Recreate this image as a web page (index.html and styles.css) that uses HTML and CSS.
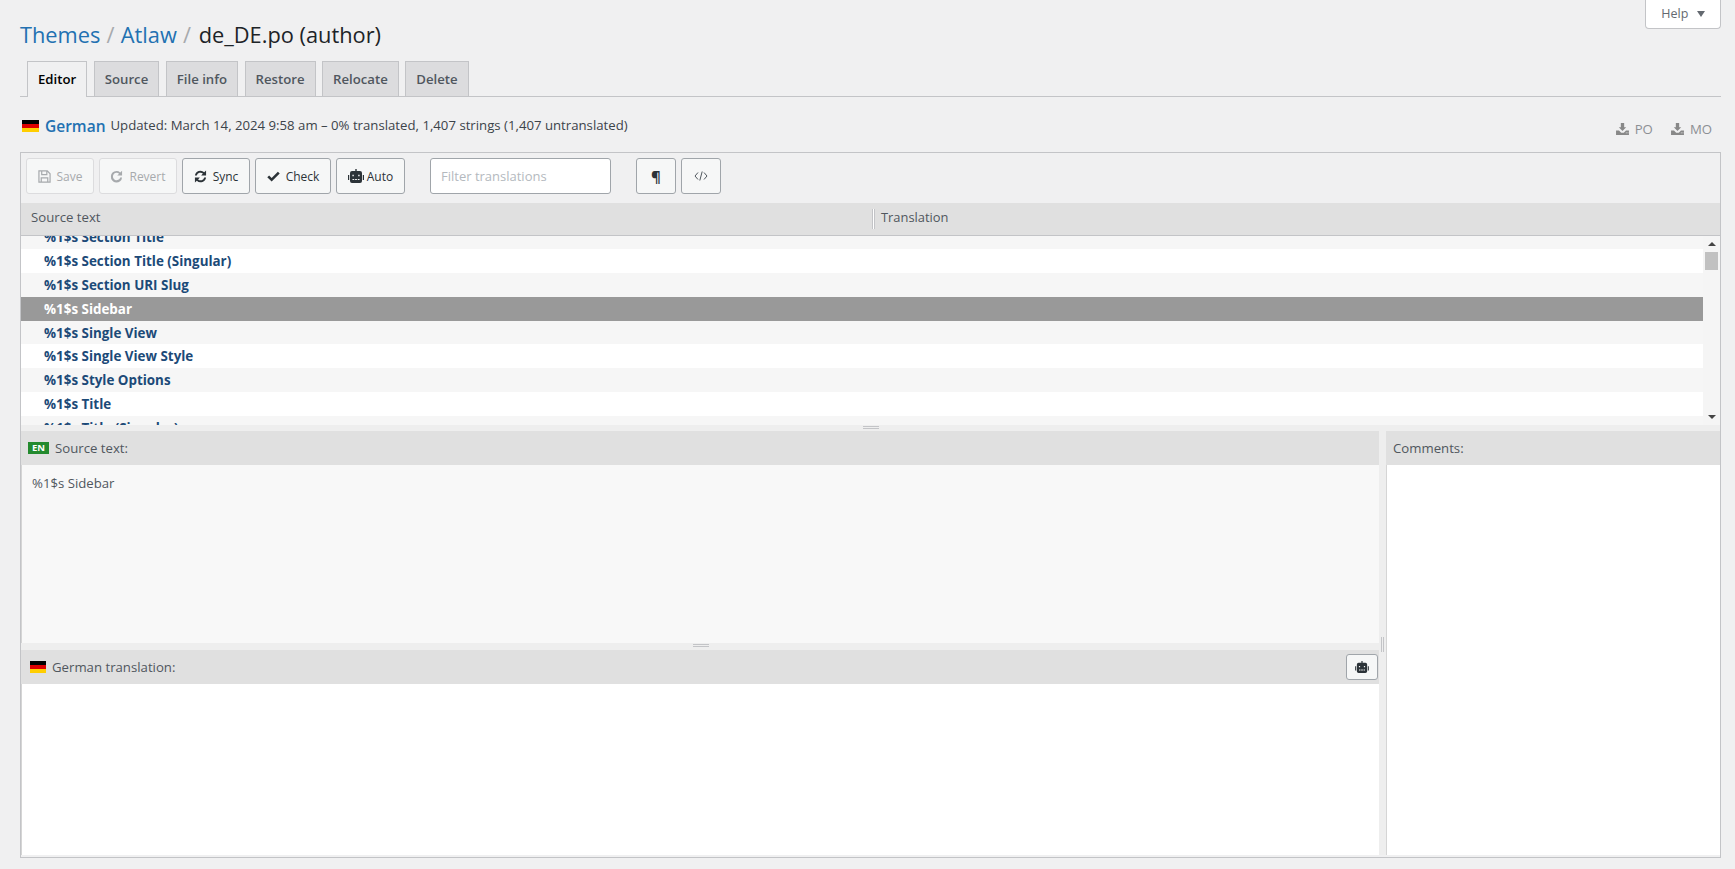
FILE: index.html
```html
<!DOCTYPE html>
<html lang="en">
<head>
    <meta charset="UTF-8">
    <meta name="viewport" content="width=device-width, initial-scale=1.0">
    <title>de_DE.po (author)</title>
    <link rel="stylesheet" href="styles.css">
</head>
<body>
    <svg class="sprites" width="0" height="0" aria-hidden="true">
        <symbol id="i-robot" viewBox="0 0 16 14">
            <path fill-rule="evenodd" d="M7.300 0h1.400v2H12a2 2 0 0 1 2 2v8a2 2 0 0 1-2 2H4a2 2 0 0 1-2-2V4a2 2 0 0 1 2-2h3.300zM4.400 5.800v1.400h1.400V5.800zm5.800 0v1.400h1.400V5.800zM4.500 10v1h1.700v-1zm2.600 0v1h1.800v-1zm2.700 0v1h1.700v-1zM0 6h1.200v5H0zM14.800 6H16v5h-1.200z"/>
        </symbol>
        <symbol id="i-download" viewBox="0 0 14 13">
            <path d="M5.200 0h3.600v4.600H11L7 8.800 3 4.600h2.200zM0 8.200h3.200L5.600 10.600h2.800l2.400-2.400H14V13H0zM10.600 10.200v1h1v-1zm1.800 0v1h1v-1z"/>
        </symbol>
    </svg>

    <div class="wrap">
        <a class="help-tab">Help <span class="caret"></span></a>

        <h1 class="crumbs">
            <a>Themes</a> <span class="sep">/</span> <a>Atlaw</a> <span class="sep sep-last">/</span> de_DE.po (author)
        </h1>

        <nav class="tabs">
            <a class="tab active">Editor</a>
            <a class="tab">Source</a>
            <a class="tab">File info</a>
            <a class="tab">Restore</a>
            <a class="tab">Relocate</a>
            <a class="tab">Delete</a>
        </nav>

        <div class="meta">
            <p class="summary">
                <span class="flag"></span><a class="lang">German</a><span class="stats">Updated: March 14, 2024 9:58 am – 0% translated, 1,407 strings (1,407 untranslated)</span>
            </p>
            <div class="downloads">
                <a class="dl"><svg class="dl-icon"><use href="#i-download"/></svg>PO</a>
                <a class="dl"><svg class="dl-icon"><use href="#i-download"/></svg>MO</a>
            </div>
        </div>

        <div class="editor">
            <div class="toolbar">
                <button class="btn btn-save" disabled>
                    <svg class="icon icon-save" viewBox="0 0 14 14"><path d="M1 1H10L13 4V13H1ZM4 1V5H9.500V1M3.500 13V8.500H10.500V13" fill="none" stroke="currentColor" stroke-width="1.300"/></svg>
                    Save
                </button>
                <button class="btn btn-revert" disabled>
                    <svg class="icon" viewBox="0 0 14 14"><path d="M1 7a6 6 0 0 1 10-4.400L13 .8V6H7.800l2-2A4 4 0 1 0 11 8h2A6 6 0 0 1 1 7z"/></svg>
                    Revert
                </button>
                <button class="btn btn-sync">
                    <svg class="icon" viewBox="0 0 14 14"><path d="M1 6A6 6 0 0 1 11 2.300L13 .5V5.800H7.700L9.600 3.900A4 4 0 0 0 3 6zM13 8A6 6 0 0 1 3 11.700L1 13.500V8.200H6.300L4.400 10.100A4 4 0 0 0 11 8z"/></svg>
                    Sync
                </button>
                <button class="btn btn-check">
                    <svg class="icon" viewBox="0 0 14 14"><path d="M5 12.500L.3 7.800 2.300 5.800 5 8.500 11.700 1.800 13.700 3.800z"/></svg>
                    Check
                </button>
                <button class="btn btn-auto">
                    <svg class="icon icon-robot"><use href="#i-robot"/></svg>
                    Auto
                </button>
                <input class="filter" type="text" placeholder="Filter translations">
                <button class="btn btn-square btn-para">¶</button>
                <button class="btn btn-square">
                    <svg class="icon-code" viewBox="0 0 14 10"><path d="M4 1.500L1 5l3 3.500M10 1.500L13 5l-3 3.500M8.200 .5L5.800 9.500" fill="none" stroke="currentColor" stroke-width="1"/></svg>
                </button>
            </div>

            <div class="grid-head">
                <div class="col col-source">Source text</div>
                <div class="col col-target">Translation</div>
            </div>

            <div class="list">
                <div class="rows">
                    <div class="rows-inner">
                        <div class="row">%1$s Section Title</div>
                        <div class="row">%1$s Section Title (Singular)</div>
                        <div class="row">%1$s Section URI Slug</div>
                        <div class="row selected">%1$s Sidebar</div>
                        <div class="row">%1$s Single View</div>
                        <div class="row">%1$s Single View Style</div>
                        <div class="row">%1$s Style Options</div>
                        <div class="row">%1$s Title</div>
                        <div class="row">%1$s Title (Singular)</div>
                    </div>
                </div>
                <div class="scrollbar">
                    <span class="arrow arrow-up"></span>
                    <span class="thumb"></span>
                    <span class="arrow arrow-down"></span>
                </div>
            </div>

            <div class="split-h"></div>

            <div class="panes">
                <div class="main-col">
                    <section class="pane pane-source">
                        <header class="pane-head"><span class="badge">EN</span>Source text:</header>
                        <div class="pane-body">%1$s Sidebar</div>
                    </section>
                    <div class="split-h split-small"></div>
                    <section class="pane pane-target">
                        <header class="pane-head">
                            <span class="flag flag-small"></span>German translation:
                            <button class="btn btn-mini"><svg class="icon icon-mini"><use href="#i-robot"/></svg></button>
                        </header>
                        <div class="pane-body"></div>
                    </section>
                </div>
                <div class="split-v"></div>
                <section class="pane pane-comments">
                    <header class="pane-head">Comments:</header>
                    <div class="pane-body"></div>
                </section>
            </div>
        </div>
    </div>
</body>
</html>
```

FILE: styles.css
```css
html, body {
    margin: 0;
    height: 100%;
    overflow: hidden;
}
body {
    background: #f0f0f1;
    color: #3c434a;
    font-family: "Open Sans", "Noto Sans", sans-serif;
    font-size: 13.2px;
}
.sprites {
    display: block;
    height: 0;
}
.wrap {
    margin: 0 14px 0 20px;
}
a {
    color: #2271b1;
    text-decoration: none;
}

/* top of page */
.help-tab {
    float: right;
    width: 76px;
    height: 29px;
    box-sizing: border-box;
    background: #fff;
    border: 1px solid #c3c4c7;
    border-top: 0;
    border-radius: 0 0 4px 4px;
    color: #646970;
    font-size: 12.5px;
    text-align: center;
    line-height: 27px;
}
.caret {
    display: inline-block;
    margin-left: 5px;
    border: 4px solid transparent;
    border-top: 6px solid #646970;
    border-bottom: 0;
    vertical-align: 1px;
}
.crumbs {
    margin: 0;
    padding-top: 19px;
    color: #1d2327;
    font-size: 21.8px;
    font-weight: 400;
    line-height: 32px;
    height: 32px;
}
.crumbs .sep {
    margin: 0 .5px;
    color: #a7aaad;
}
.crumbs .sep-last {
    margin-right: 2px;
}
.tabs {
    display: flex;
    gap: 6.5px;
    margin-top: 10px;
    padding-left: 7px;
    height: 35px;
    border-bottom: 1px solid #c3c4c7;
}
.tab {
    padding: 0 10px;
    height: 35px;
    box-sizing: border-box;
    background: #dcdcde;
    border: 1px solid #c3c4c7;
    border-bottom: 0;
    color: #50575e;
    font-weight: 600;
    line-height: 34px;
}
.tab.active {
    height: 36px;
    background: #f0f0f1;
    color: #000;
}
.meta {
    display: flex;
    justify-content: space-between;
    height: 55px;
}
.summary {
    margin: 19px 0 0;
    display: flex;
    align-items: center;
    height: 20px;
}
.stats {
    position: relative;
    top: -1px;
}
.flag {
    display: inline-block;
    flex: none;
    width: 17px;
    height: 12px;
    margin: 0 6px 0 2px;
    background: linear-gradient(#000 33.3%, #dd0000 33.3%, #dd0000 66.6%, #ffce00 66.6%);
}
.lang {
    margin-right: 5px;
    font-size: 15.5px;
    font-weight: 600;
}
.downloads {
    display: flex;
    gap: 18px;
    margin: 25px 9px 0 0;
}
.dl {
    display: flex;
    align-items: center;
    height: 14px;
    color: #8c8f94;
}
.dl-icon {
    width: 13px;
    height: 12px;
    margin-right: 6px;
    fill: #888;
}

/* editor box */
.editor {
    display: flex;
    flex-direction: column;
    height: 706px;
    box-sizing: border-box;
    border: 1px solid #c3c4c7;
    border-bottom: 0;
}
.toolbar {
    display: flex;
    align-items: flex-start;
    flex: none;
    height: 50px;
    box-sizing: border-box;
    padding: 5px 0 0 5px;
    gap: 5px;
}
.btn {
    display: inline-flex;
    align-items: center;
    justify-content: center;
    gap: 6px;
    height: 36px;
    padding: 0;
    box-sizing: border-box;
    background: #f6f7f7;
    border: 1px solid #a0a5aa;
    border-radius: 3px;
    color: #2c3338;
    font-family: inherit;
    font-size: 12px;
}
.btn:disabled {
    border-color: #dcdcde;
    color: #a7aaad;
}
.btn-save { width: 68px; }
.btn-revert { width: 78px; }
.btn-sync { width: 68px; }
.btn-check { width: 76px; }
.btn-auto { width: 69px; gap: 3px; }
.btn-square { width: 40px; }
.btn-para {
    font-size: 15px;
    font-weight: 700;
}
.icon {
    width: 13px;
    height: 13px;
    fill: currentColor;
}
.icon-save {
    fill: none;
}
.icon-robot {
    width: 16px;
    height: 14px;
}
.icon-mini {
    width: 14px;
    height: 12px;
}
.icon-code {
    width: 14px;
    height: 10px;
    color: #50575e;
}
.filter {
    width: 181px;
    height: 36px;
    margin: 0 20px;
    padding: 0 10px;
    box-sizing: border-box;
    background: #fff;
    border: 1px solid #a0a5aa;
    border-radius: 3px;
    font-family: inherit;
    font-size: 13px;
}
.filter::placeholder {
    color: #b4b9be;
}
.grid-head {
    display: flex;
    flex: none;
    height: 33px;
    box-sizing: border-box;
    background: #e0e0e0;
    border-bottom: 1px solid #c3c4c7;
    line-height: 29px;
    color: #50575e;
}
.col-source {
    width: 851px;
    padding-left: 10px;
    box-sizing: border-box;
}
.col-target {
    position: relative;
    padding-left: 9px;
    font-size: 12.9px;
}
.col-target::before {
    content: "";
    position: absolute;
    left: 0;
    top: 6px;
    height: 20px;
    width: 1px;
    border-left: 1px solid #c3c4c7;
    border-right: 1px solid #c3c4c7;
    background: #fff;
}
.list {
    display: flex;
    flex: none;
    height: 189px;
}
.rows {
    flex: 1;
    overflow: hidden;
}
.rows-inner {
    margin-top: -11px;
}
.row {
    height: 23.9px;
    padding-left: 23px;
    background: #fff;
    color: #1c4a78;
    font-size: 13.4px;
    font-weight: 700;
    line-height: 25px;
}
.row:nth-child(odd) {
    background: #f6f6f6;
}
.row.selected {
    background: #999;
    color: #fff;
}
.scrollbar {
    display: flex;
    flex-direction: column;
    align-items: center;
    width: 17px;
    background: #f5f5f5;
}
.thumb {
    width: 13px;
    height: 18px;
    margin-top: 6px;
    background: #c1c1c1;
}
.arrow {
    border: 4px solid transparent;
    width: 0;
    height: 0;
}
.arrow-up {
    margin-top: 6px;
    border-top: 0;
    border-bottom: 4px solid #444;
}
.arrow-down {
    margin-top: auto;
    margin-bottom: 6px;
    border-bottom: 0;
    border-top: 4px solid #444;
}
.split-h {
    position: relative;
    flex: none;
    height: 6px;
    background: #eee;
}
.split-h::after {
    content: "";
    position: absolute;
    left: 50%;
    top: 1px;
    width: 16px;
    height: 1px;
    margin-left: -8px;
    border-top: 1px solid #c3c4c7;
    border-bottom: 1px solid #c3c4c7;
}
.split-small {
    height: 7px;
}
.split-small::after {
    margin-left: -7px;
}
.panes {
    display: flex;
    flex: 1;
    min-height: 0;
    padding-bottom: 2px;
    border-bottom: 1px solid #c3c4c7;
}
.main-col {
    display: flex;
    flex-direction: column;
    width: 1358px;
}
.split-v {
    position: relative;
    width: 7px;
    flex: none;
    background: #eee;
}
.split-v::after {
    content: "";
    position: absolute;
    left: 2px;
    top: 206px;
    width: 1px;
    height: 15px;
    border-left: 1px solid #c3c4c7;
    border-right: 1px solid #c3c4c7;
}
.pane {
    display: flex;
    flex-direction: column;
}
.pane-source { height: 212px; }
.pane-target { flex: 1; }
.pane-comments { flex: 1; }
.pane-head {
    display: flex;
    align-items: center;
    flex: none;
    height: 34px;
    padding-left: 6px;
    background: #e0e0e0;
    color: #50575e;
}
.pane-body {
    flex: 1;
    background: #fff;
    border-left: 1px solid #d5d5d5;
}
.pane-source .pane-body {
    padding: 9px 10px;
    background: #f8f8f8;
    color: #50575e;
}
.badge {
    margin: 0 6px 0 1px;
    padding: 0 4px;
    background: #238a2e;
    color: #fff;
    font-size: 9.5px;
    font-weight: 700;
    line-height: 12px;
}
.flag-small {
    width: 16px;
    margin: 0 6px 0 3px;
}
.btn-mini {
    width: 32px;
    height: 26px;
    margin-left: auto;
    margin-right: 1px;
}
.pane-comments .pane-head {
    padding-left: 7px;
}
```
